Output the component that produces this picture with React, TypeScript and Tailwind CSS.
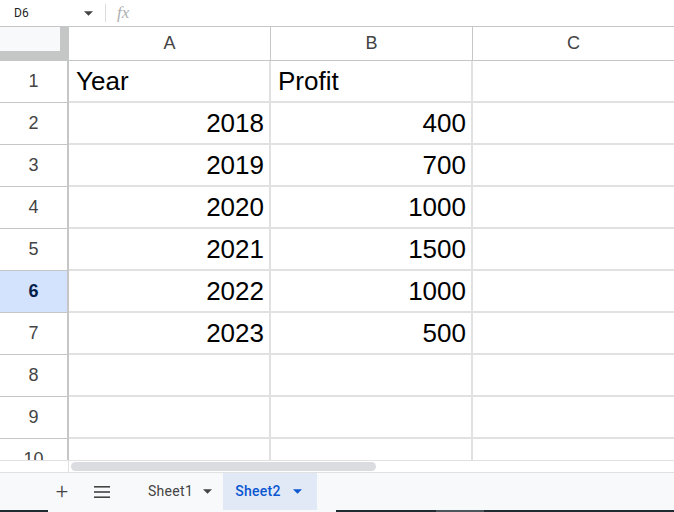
import React from 'react';

const rows: { n: number; a: string; b: string }[] = [
  { n: 1, a: 'Year', b: 'Profit' },
  { n: 2, a: '2018', b: '400' },
  { n: 3, a: '2019', b: '700' },
  { n: 4, a: '2020', b: '1000' },
  { n: 5, a: '2021', b: '1500' },
  { n: 6, a: '2022', b: '1000' },
  { n: 7, a: '2023', b: '500' },
  { n: 8, a: '', b: '' },
  { n: 9, a: '', b: '' },
  { n: 10, a: '', b: '' },
];

function Caret({ className }: { className?: string }) {
  return (
    <svg className={className} width="10" height="6" viewBox="0 0 10 5" fill="currentColor">
      <path d="M0 0h10L5 5z" />
    </svg>
  );
}

export default function App() {
  return (
    <div className="w-[674px] h-[512px] overflow-hidden bg-white flex flex-col font-['Liberation_Sans',Arial,sans-serif] text-black">
      {/* Name box + formula bar */}
      <div className="h-[27px] shrink-0 flex items-center border-b border-[#c4c7c5]">
        <span className="pl-[14px] w-[84px] text-[12px] text-[#1f1f1f] font-['Roboto',sans-serif]">D6</span>
        <Caret className="text-[#444] w-[9px] h-[5px]" />
        <div className="ml-[12px] w-px h-[18px] bg-[#dadce0]" />
        <span className="ml-[11px] text-[17px] italic text-[#b0b0b0] font-['Liberation_Serif',serif]">fx</span>
      </div>

      {/* Grid */}
      <div className="flex-1 overflow-hidden">
        <div className="grid grid-cols-[69px_202px_202px_1fr]">
          {/* Header row */}
          <div className="h-[34px] bg-[#f8f9fa] border-r-[9px] border-b-[10px] border-[#c4c7c5]" />
          <div className="h-[34px] flex items-center justify-center text-[18px] text-[#444] border-r border-b border-[#c4c7c5]">A</div>
          <div className="h-[34px] flex items-center justify-center text-[18px] text-[#444] border-r border-b border-[#c4c7c5]">B</div>
          <div className="h-[34px] flex items-center justify-center text-[18px] text-[#444] border-b border-[#c4c7c5]">C</div>

          {rows.map((r) => {
            const active = r.n === 6;
            const first = r.n === 1;
            return (
              <React.Fragment key={r.n}>
                <div
                  className={
                    'h-[42px] flex items-center justify-center text-[18px] border-r-2 border-b ' +
                    (active
                      ? 'bg-[#d3e3fd] text-[#041e49] font-bold border-[#c4c7c5]'
                      : 'text-[#444] border-[#c4c7c5]')
                  }
                >
                  {r.n}
                </div>
                <div
                  className={
                    'h-[42px] flex items-center pl-[7px] pr-[5px] text-[26px] border-r-2 border-b-2 border-[#e1e1e1] ' +
                    (first ? 'justify-start' : 'justify-end')
                  }
                >
                  {r.a}
                </div>
                <div
                  className={
                    'h-[42px] flex items-center pl-[7px] pr-[5px] text-[26px] border-r-2 border-b-2 border-[#e1e1e1] ' +
                    (first ? 'justify-start' : 'justify-end')
                  }
                >
                  {r.b}
                </div>
                <div className="h-[42px] border-b-2 border-[#e1e1e1]" />
              </React.Fragment>
            );
          })}
        </div>
      </div>

      {/* Horizontal scrollbar */}
      <div className="h-[13px] shrink-0 flex items-center border-t border-b border-[#e1e1e1] bg-white">
        <div className="w-[69px] h-full border-r border-[#e1e1e1]" />
        <div className="ml-[2px] w-[305px] h-[9px] rounded-full bg-[#dadce0]" />
      </div>

      {/* Sheet tabs */}
      <div className="h-[37px] shrink-0 bg-[#f8f9fa] flex items-center text-[14px] font-['Roboto',sans-serif]">
        <span className="ml-[55px] w-[14px] text-center text-[22px] font-light text-[#444] leading-none">+</span>
        <svg className="ml-[25px]" width="16" height="12" viewBox="0 0 16 12" fill="#444">
          <rect x="0" y="0" width="16" height="1.6" />
          <rect x="0" y="5.2" width="16" height="1.6" />
          <rect x="0" y="10.4" width="16" height="1.6" />
        </svg>
        <div className="ml-[28px] h-full flex items-center gap-[10px] px-[10px] text-[#444]">
          <span className="tracking-[0.3px]">Sheet1</span>
          <Caret className="w-[9px] h-[5px]" />
        </div>
        <div className="ml-[1px] h-full flex items-center gap-[12px] pl-[12px] pr-[15px] bg-[#e1e9f7] text-[#0b57d0] font-medium">
          <span className="tracking-[0.3px]">Sheet2</span>
          <Caret className="w-[9px] h-[5px]" />
        </div>
      </div>

      {/* Taskbar sliver */}
      <div className="h-[2px] shrink-0 flex">
        <div className="w-[48px] bg-[#1f2d33]" />
        <div className="w-[288px] bg-[#f8f9fa]" />
        <div className="w-[100px] bg-[#1f2d33]" />
        <div className="w-[48px] bg-[#4a555c]" />
        <div className="flex-1 bg-[#1f2d33]" />
      </div>
    </div>
  );
}
